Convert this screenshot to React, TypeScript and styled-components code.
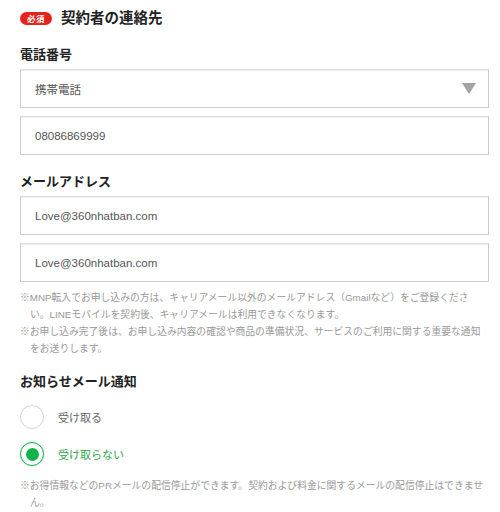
import styled, { createGlobalStyle } from "styled-components"

const GlobalStyle = createGlobalStyle`
  html, body {
    margin: 0;
    padding: 0;
    background: #fff;
  }
  body {
    font-family: "Liberation Sans", "Noto Sans CJK JP", sans-serif;
    color: #222;
  }
  * {
    box-sizing: border-box;
  }
`

const Page = styled.div`
  width: 500px;
  padding: 9px 11px 20px 20px;
  display: flex;
  flex-direction: column;
`

const Header = styled.div`
  display: flex;
  align-items: center;
  gap: 9px;
  height: 18px;
`

const Badge = styled.span`
  display: inline-flex;
  align-items: center;
  justify-content: center;
  width: 32px;
  height: 13px;
  border-radius: 7px;
  background: #e3231c;
  color: #fff;
  font-size: 8.5px;
  font-weight: bold;
  letter-spacing: 0.5px;
`

const Title = styled.h2`
  margin: 0;
  font-size: 14.5px;
  line-height: 18px;
  font-weight: bold;
  color: #222;
`

const Label = styled.div<{ $top: number }>`
  margin-top: ${(p) => p.$top}px;
  font-size: 13px;
  line-height: 18px;
  font-weight: bold;
  color: #222;
`

const fieldBox = `
  width: 100%;
  height: 39px;
  border: 1px solid #cccccc;
  border-top-color: #dedede;
  box-shadow: inset 0 1px 0 #ededed;
  background: #fff;
  padding: 0 14px;
  font-family: "Liberation Sans", "Noto Sans CJK JP", sans-serif;
  font-size: 11.5px;
  color: #555;
`

const SelectBox = styled.div`
  ${fieldBox}
  margin-top: 5px;
  display: flex;
  align-items: center;
  justify-content: space-between;
  padding-right: 12px;
`

const Input = styled.input<{ $top: number }>`
  ${fieldBox}
  display: block;
  margin-top: ${(p) => p.$top}px;
  outline: none;
`

const Notes = styled.div<{ $top: number }>`
  margin-top: ${(p) => p.$top}px;
  width: 466px;
`

const Note = styled.p`
  margin: 0;
  padding-left: 10px;
  text-indent: -10px;
  font-size: 9.8px;
  line-height: 17px;
  color: #999;
`

const SectionTitle = styled.div`
  margin-top: 16px;
  font-size: 13px;
  line-height: 18px;
  font-weight: bold;
  color: #222;
`

const RadioList = styled.div`
  margin-top: 14px;
  display: flex;
  flex-direction: column;
  gap: 13px;
`

const RadioRow = styled.label`
  display: flex;
  align-items: center;
  gap: 14px;
  height: 24px;
`

const RadioCircle = styled.span<{ $checked?: boolean }>`
  width: 24px;
  height: 24px;
  border-radius: 50%;
  border: ${(p) => (p.$checked ? "1.5px solid #16b04c" : "1px solid #d2d2d2")};
  box-shadow: ${(p) => (p.$checked ? "0 0 1px rgba(22,176,76,0.4)" : "none")};
  display: flex;
  align-items: center;
  justify-content: center;
  background: #fff;

  &::after {
    content: "";
    display: ${(p) => (p.$checked ? "block" : "none")};
    width: 13px;
    height: 13px;
    border-radius: 50%;
    background: #12b44a;
  }
`

const RadioLabel = styled.span<{ $checked?: boolean }>`
  font-size: 11px;
  color: ${(p) => (p.$checked ? "#2fa652" : "#666")};
`

const Caret = () => (
  <svg width="14" height="11" viewBox="0 0 14 11">
    <polygon points="0,0 14,0 7,11" fill="#a3a3a3" />
  </svg>
)

const App = () => {
  return (
    <>
      <GlobalStyle />
      <Page>
        <Header>
          <Badge>必須</Badge>
          <Title>契約者の連絡先</Title>
        </Header>

        <Label $top={19}>電話番号</Label>
        <SelectBox>
          <span>携帯電話</span>
          <Caret />
        </SelectBox>
        <Input $top={8} defaultValue="08086869999" readOnly />

        <Label $top={18}>メールアドレス</Label>
        <Input $top={5} defaultValue="Love@360nhatban.com" readOnly />
        <Input $top={8} defaultValue="Love@360nhatban.com" readOnly />

        <Notes $top={7}>
          <Note>
            ※MNP転入でお申し込みの方は、キャリアメール以外のメールアドレス（Gmailなど）をご登録ください。LINEモバイルを契約後、キャリアメールは利用できなくなります。
          </Note>
          <Note>
            ※お申し込み完了後は、お申し込み内容の確認や商品の準備状況、サービスのご利用に関する重要な通知をお送りします。
          </Note>
        </Notes>

        <SectionTitle>お知らせメール通知</SectionTitle>
        <RadioList>
          <RadioRow>
            <RadioCircle />
            <RadioLabel>受け取る</RadioLabel>
          </RadioRow>
          <RadioRow>
            <RadioCircle $checked />
            <RadioLabel $checked>受け取らない</RadioLabel>
          </RadioRow>
        </RadioList>

        <Notes $top={11}>
          <Note>
            ※お得情報などのPRメールの配信停止ができます。契約および料金に関するメールの配信停止はできません。
          </Note>
        </Notes>
      </Page>
    </>
  )
}

export default App
